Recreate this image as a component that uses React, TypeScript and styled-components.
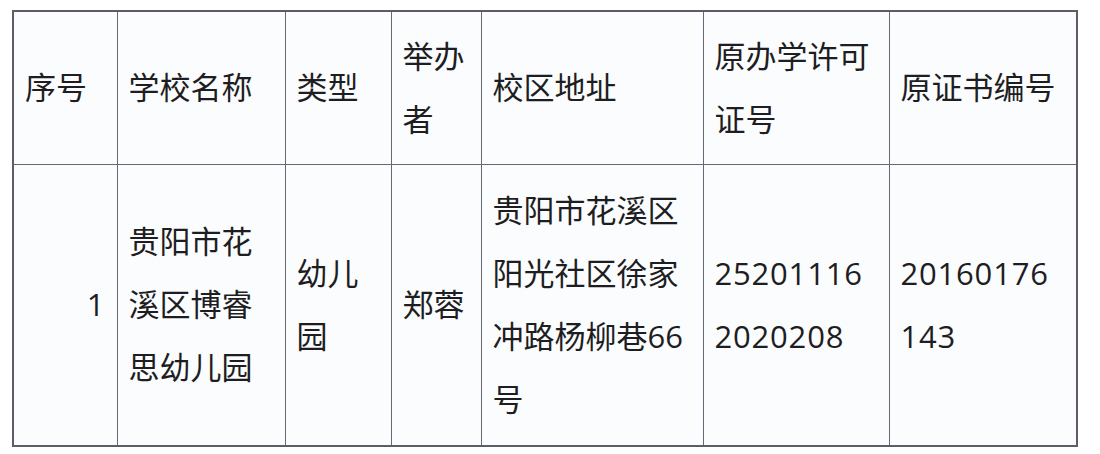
import React from 'react';
import styled, { createGlobalStyle } from 'styled-components';

const GlobalStyle = createGlobalStyle`
  html, body {
    margin: 0;
    padding: 0;
    background: #ffffff;
  }
  body {
    font-family: "Open Sans", "Noto Sans CJK SC", sans-serif;
    color: #1e1e22;
  }
`;

const Page = styled.div`
  padding: 10px 22px 0 12px;
`;

const Table = styled.table`
  width: 1065px;
  border-collapse: collapse;
  table-layout: fixed;
  border: 2px solid #5f5c68;
  background: #fbfcfe;
`;

const Cell = styled.td<{ align?: 'left' | 'right' }>`
  border: 1px solid #6a6774;
  padding: 0 12px 0 11px;
  font-size: 31px;
  line-height: 63px;
  vertical-align: middle;
  text-align: ${({ align }) => align ?? 'left'};
  word-break: break-all;
  font-weight: 400;
`;

const HeadRow = styled.tr`
  height: 153px;
`;

const BodyRow = styled.tr`
  height: 282px;
`;

const Num = styled.span`
  letter-spacing: 0.8px;
`;

const widths = [104, 168, 106, 90, 222, 186, 188];

const headers = ['序号', '学校名称', '类型', '举办者', '校区地址', '原办学许可证号', '原证书编号'];

const App = () => {
  return (
    <Page>
      <GlobalStyle />
      <Table>
        <colgroup>
          {widths.map((w, i) => (
            <col key={i} style={{ width: w }} />
          ))}
        </colgroup>
        <tbody>
          <HeadRow>
            {headers.map((h) => (
              <Cell key={h}>{h}</Cell>
            ))}
          </HeadRow>
          <BodyRow>
            <Cell align="right">1</Cell>
            <Cell>贵阳市花溪区博睿思幼儿园</Cell>
            <Cell>幼儿园</Cell>
            <Cell>郑蓉</Cell>
            <Cell>贵阳市花溪区阳光社区徐家冲路杨柳巷66号</Cell>
            <Cell>
              <Num>252011162020208</Num>
            </Cell>
            <Cell>
              <Num>20160176143</Num>
            </Cell>
          </BodyRow>
        </tbody>
      </Table>
    </Page>
  );
};

export default App;
